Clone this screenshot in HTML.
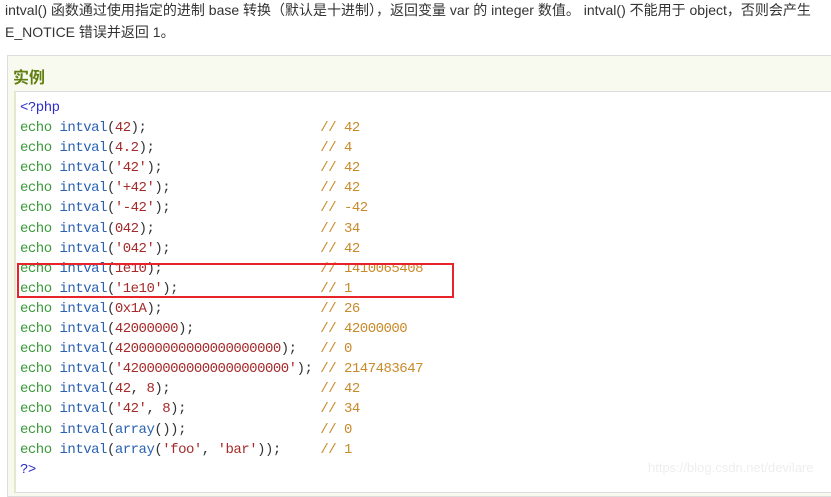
<!DOCTYPE html>
<html><head><meta charset="utf-8"><style>
html,body{margin:0;padding:0;width:831px;height:483px;overflow:hidden;background:#fff;}
.p{position:absolute;left:5px;font-family:"Liberation Sans","Noto Sans CJK SC",sans-serif;font-size:14px;color:#333;white-space:nowrap;}
.box{position:absolute;left:7px;top:55px;width:840px;height:440px;border:1px solid #ddd;background:#f8f9ef;}
.hd{position:absolute;left:13px;top:64px;font-family:"Liberation Sans","Noto Sans CJK SC",sans-serif;font-size:16px;font-weight:bold;color:#617f10;}
.code{position:absolute;left:14px;top:91px;width:830px;height:400px;background:#fff;border:1px solid #ddd;border-left:2px solid #e3e9cf;}
.c{position:absolute;left:20px;top:98px;font-family:"Liberation Mono",monospace;font-size:14px;letter-spacing:-0.5px;line-height:20.1px;white-space:pre;color:#333;}
.e{color:#3a9a3a}.f{color:#2b62b0}.n{color:#a52a2a}.m{color:#c98a2b}.t{color:#2d2dcc}
.red{position:absolute;left:17px;top:263px;width:433px;height:31px;border:2px solid #e8232a;}
.wm{position:absolute;left:648px;top:460px;font-family:"Liberation Sans",sans-serif;font-size:13px;color:#eeeeee;}
</style></head><body>
<div class="p" style="top:0px;">intval() 函数通过使用指定的进制 base 转换（默认是十进制），返回变量 var 的 integer 数值。 intval() 不能用于 object，否则会产生</div>
<div class="p" style="top:22px;">E_NOTICE 错误并返回 1。</div>
<div class="box"></div>
<div class="hd">实例</div>
<div class="code"></div>
<div class="c"><span class="t">&lt;?php</span>
<span class="e">echo</span> <span class="f">intval</span>(<span class="n">42</span>);                      <span class="m">// 42</span>
<span class="e">echo</span> <span class="f">intval</span>(<span class="n">4.2</span>);                     <span class="m">// 4</span>
<span class="e">echo</span> <span class="f">intval</span>(<span class="n">'42'</span>);                    <span class="m">// 42</span>
<span class="e">echo</span> <span class="f">intval</span>(<span class="n">'+42'</span>);                   <span class="m">// 42</span>
<span class="e">echo</span> <span class="f">intval</span>(<span class="n">'-42'</span>);                   <span class="m">// -42</span>
<span class="e">echo</span> <span class="f">intval</span>(<span class="n">042</span>);                     <span class="m">// 34</span>
<span class="e">echo</span> <span class="f">intval</span>(<span class="n">'042'</span>);                   <span class="m">// 42</span>
<span class="e">echo</span> <span class="f">intval</span>(<span class="n">1e10</span>);                    <span class="m">// 1410065408</span>
<span class="e">echo</span> <span class="f">intval</span>(<span class="n">'1e10'</span>);                  <span class="m">// 1</span>
<span class="e">echo</span> <span class="f">intval</span>(<span class="n">0x1A</span>);                    <span class="m">// 26</span>
<span class="e">echo</span> <span class="f">intval</span>(<span class="n">42000000</span>);                <span class="m">// 42000000</span>
<span class="e">echo</span> <span class="f">intval</span>(<span class="n">420000000000000000000</span>);   <span class="m">// 0</span>
<span class="e">echo</span> <span class="f">intval</span>(<span class="n">'420000000000000000000'</span>); <span class="m">// 2147483647</span>
<span class="e">echo</span> <span class="f">intval</span>(<span class="n">42</span>, <span class="n">8</span>);                   <span class="m">// 42</span>
<span class="e">echo</span> <span class="f">intval</span>(<span class="n">'42'</span>, <span class="n">8</span>);                 <span class="m">// 34</span>
<span class="e">echo</span> <span class="f">intval</span>(<span class="f">array</span>());                 <span class="m">// 0</span>
<span class="e">echo</span> <span class="f">intval</span>(<span class="f">array</span>(<span class="n">'foo'</span>, <span class="n">'bar'</span>));     <span class="m">// 1</span>
<span class="t">?&gt;</span></div>
<div class="red"></div>
<div class="wm">https://blog.csdn.net/devilare</div>
</body></html>
